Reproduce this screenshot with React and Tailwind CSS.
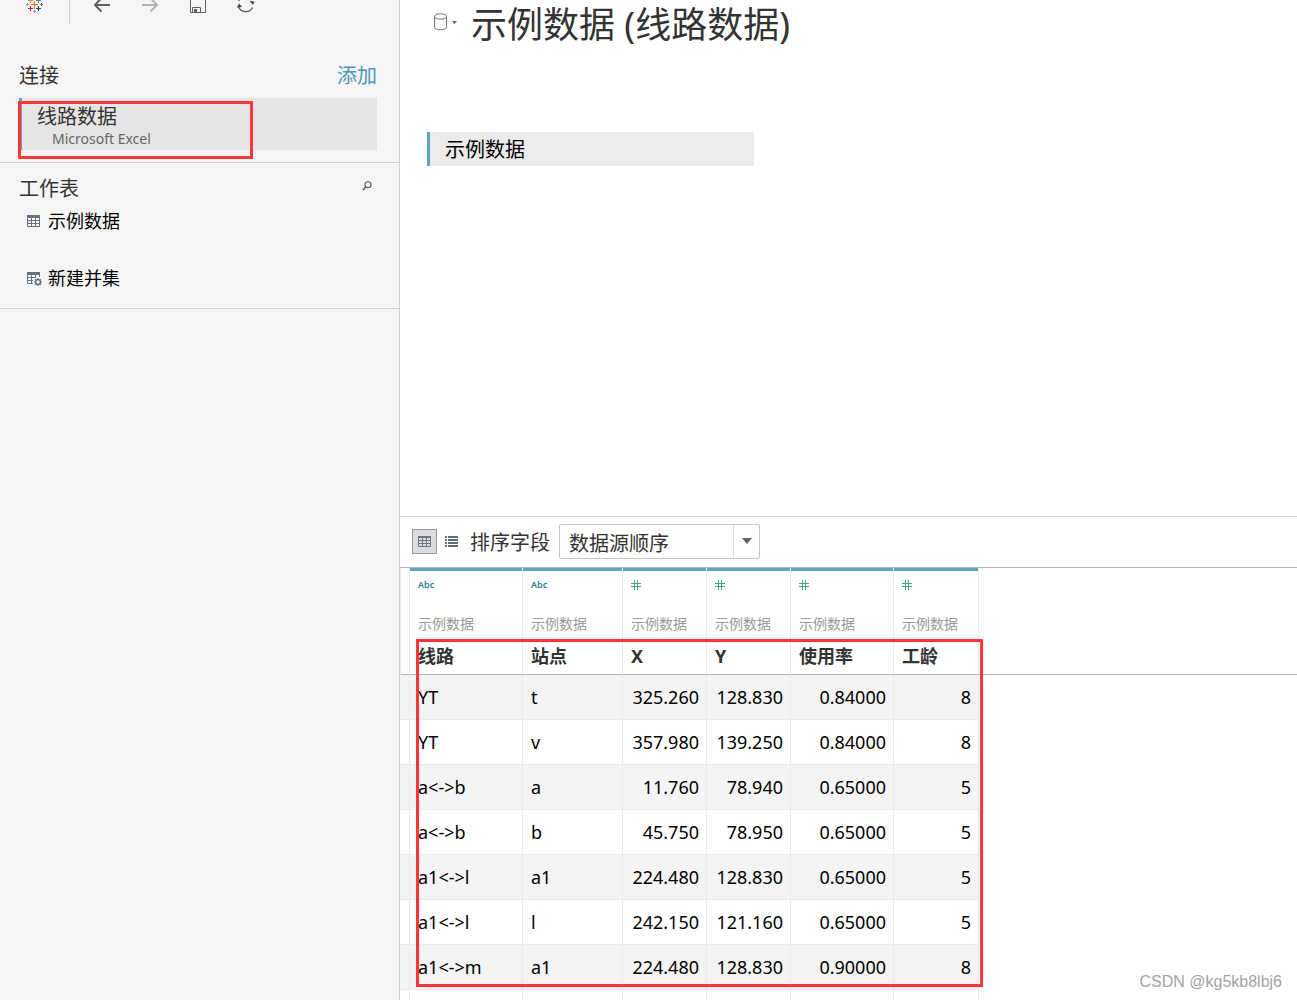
import { useState } from 'react';

const columns = [
  { name: '线路', type: 'text', width: 'w-[113px]' },
  { name: '站点', type: 'text', width: 'w-[100px]' },
  { name: 'X', type: 'number', width: 'w-[84px]' },
  { name: 'Y', type: 'number', width: 'w-[84px]' },
  { name: '使用率', type: 'number', width: 'w-[103px]' },
  { name: '工龄', type: 'number', width: 'w-[85px]' },
];

const rows = [
  ['YT', 't', '325.260', '128.830', '0.84000', '8'],
  ['YT', 'v', '357.980', '139.250', '0.84000', '8'],
  ['a<->b', 'a', '11.760', '78.940', '0.65000', '5'],
  ['a<->b', 'b', '45.750', '78.950', '0.65000', '5'],
  ['a1<->l', 'a1', '224.480', '128.830', '0.65000', '5'],
  ['a1<->l', 'l', '242.150', '121.160', '0.65000', '5'],
  ['a1<->m', 'a1', '224.480', '128.830', '0.90000', '8'],
  ['', '', '', '', '', ''],
];

const LogoIcon = () => (
  <svg width="24" height="14" viewBox="0 0 24 14" fill="none">
    <path d="M12.5 1v8M9 4.500h7" stroke="#e8762b" strokeWidth="1.2" />
    <path d="M8.500 -2v5M6 .5h5" stroke="#eb9129" strokeWidth="1.1" />
    <path d="M16.500 -2v5M14 .5h5" stroke="#59879b" strokeWidth="1.1" />
    <path d="M8.500 6v5M6 8.500h5" stroke="#c72035" strokeWidth="1.1" />
    <path d="M16.500 6v5M14 8.500h5" stroke="#1f457e" strokeWidth="1.1" />
    <path d="M5.500 3v3M4 4.500h3" stroke="#7ba6b8" />
    <path d="M19.500 3v3M18 4.500h3" stroke="#5b6591" />
    <path d="M12.500 10v3M11 11.500h3" stroke="#7b94b8" />
  </svg>
);

const BackIcon = () => (
  <svg width="24" height="14" viewBox="0 0 24 14" fill="none" stroke="#606060" strokeWidth="2">
    <path d="M20 5H5M11.500 -2L5 5l6.500 6.500" />
  </svg>
);

const ForwardIcon = () => (
  <svg width="24" height="14" viewBox="0 0 24 14" fill="none" stroke="#b3b3b3" strokeWidth="2">
    <path d="M4 5h15M12.500 -2L19 5l-6.500 6.500" />
  </svg>
);

const SaveIcon = () => (
  <svg width="24" height="14" viewBox="0 0 24 14" fill="none" stroke="#606060">
    <path d="M4.500 -2v14.500h15V-2M6.500 12.500v-5h8v5" />
    <path d="M8 9h3v3H8z" fill="#606060" stroke="none" />
  </svg>
);

const RefreshIcon = () => (
  <svg width="24" height="14" viewBox="0 0 24 14" fill="none" stroke="#555" strokeWidth="1.2">
    <path d="M4.500 6.500a7.600 7.600 0 0 0 14 1M4.800 1a7 7 0 0 1 1.500-2" />
    <path d="M2.800 7.500L5.200 3.500 8 7zM15.500 1l5 .5-1.500 3.500z" fill="#444" stroke="none" />
  </svg>
);

const SheetIcon = () => (
  <svg width="14" height="12" viewBox="0 0 14 12" fill="none" stroke="#68717e">
    <path d="M.5 .5h12v11H.5zM4.500 2v10M8.500 2v10M0 5.500h13M0 8.500h13" />
    <path d="M0 1.500h13" strokeWidth="3" />
  </svg>
);

const UnionIcon = () => (
  <svg width="16" height="14" viewBox="0 0 16 14" fill="none" stroke="#68717e">
    <path d="M.5 .5v11H6M4.500 2v10M8.500 2v4M0 5.500h8M0 8.500h6M12.500 1v4" />
    <path d="M0 1.500h13" strokeWidth="3" />
    <circle cx="11" cy="10" r="2.500" strokeWidth="1.500" />
    <path d="M11 6v1.500M11 12.500V14M7 10h1.500M13.500 10H15M8.200 7.200l1 1M12.800 11.800l1 1M13.800 7.200l-1 1M9.200 11.800l-1 1" strokeWidth="1.200" />
  </svg>
);

const SearchIcon = () => (
  <svg width="10" height="10" viewBox="0 0 10 10" fill="none" stroke="#555">
    <circle cx="6" cy="3.800" r="3" strokeWidth="1.100" />
    <path d="M3.800 6L.8 9.200" strokeWidth="1.300" />
  </svg>
);

const GridIcon = () => (
  <svg width="13" height="11" viewBox="0 0 13 11" fill="none" stroke="#6b7589">
    <path d="M.5 .5h12v10H.5zM4.500 1v10M8.500 1v10M0 4.500h13M0 7.500h13" />
    <path d="M0 1h13" strokeWidth="2" />
  </svg>
);

const ListIcon = () => (
  <svg width="13" height="11" viewBox="0 0 13 11" fill="#5f6b84">
    <path d="M0 0h2v2H0zM0 3h2v2H0zM0 6h2v2H0zM0 9h2v2H0zM3 0h10v2H3zM3 3h10v2H3zM3 6h10v2H3zM3 9h10v2H3z" />
  </svg>
);

const DatabaseIcon = () => (
  <svg width="24" height="18" viewBox="0 0 24 18" fill="none" stroke="#707070">
    <ellipse cx="7.500" cy="3.500" rx="6" ry="2.700" />
    <path d="M1.500 3.500v10.500c0 3.600 12 3.600 12 0V3.500" />
    <path d="M19 8h5l-2.500 3z" fill="#666" stroke="none" />
  </svg>
);

const NumberIcon = () => (
  <svg width="10" height="10" viewBox="0 0 10 10" fill="none" stroke="#45a582">
    <path d="M3.500 0v10M6.500 0v10M0 3.500h10M0 6.500h10" />
  </svg>
);

const Sidebar = () => (
  <aside className="w-[400px] shrink-0 border-r border-[#d0d0d0] bg-[#f5f5f5] text-[#333]">
    <div className="flex h-6 items-start pl-[22px]">
      <button type="button" aria-label="开始页面"><LogoIcon /></button>
      <div className="ml-[23px] mr-5 h-6 w-px bg-[#d0d0d0]" />
      <div className="flex gap-6">
        <button type="button" aria-label="后退"><BackIcon /></button>
        <button type="button" aria-label="前进"><ForwardIcon /></button>
        <button type="button" aria-label="保存"><SaveIcon /></button>
        <button type="button" aria-label="刷新"><RefreshIcon /></button>
      </div>
    </div>

    {/* Connections */}
    <section className="border-b border-[#d0d0d0] pt-9 pr-[22px] pb-3 pl-[19px]">
      <div className="flex items-center justify-between text-[20px] leading-8">
        <h2>连接</h2>
        <a href="#add" className="text-[#4996b2]">添加</a>
      </div>
      <div className="relative mt-1.5">
        <button type="button" className="block h-[52px] w-full border-l-[3px] border-[#5fa3c7] bg-[#e5e5e5] pl-[15px] text-left">
          <span className="block pt-0.5 text-[20px] leading-7">线路数据</span>
          <span className="block pl-[15px] text-[14px] leading-4 text-[#666]">Microsoft Excel</span>
        </button>
        <div className="pointer-events-none absolute top-[3px] -left-px h-[58px] w-[235px] border-[3px] border-[#ff3636]" />
      </div>
    </section>

    {/* Sheets */}
    <section className="border-b border-[#d0d0d0] pt-2 pb-3 pl-[19px]">
      <div className="flex items-center justify-between pr-[27px] text-[20px] leading-8">
        <h2 className="pt-0.5">工作表</h2>
        <button type="button" aria-label="搜索" className="pb-1"><SearchIcon /></button>
      </div>
      <button type="button" className="flex h-8 items-center pl-2 text-[18px] text-black">
        <span className="w-[21px]"><SheetIcon /></span>
        示例数据
      </button>
      <button type="button" className="mt-6 flex h-[35px] items-center pl-2 text-[18px] text-black">
        <span className="w-[21px]"><UnionIcon /></span>
        新建并集
      </button>
    </section>
  </aside>
);

const DataGrid = () => (
  <div className="relative min-h-0 flex-1 overflow-hidden">
    <table className="w-full table-fixed border-separate border-spacing-0">
      <colgroup>
        <col className="w-[10px]" />
        {columns.map(c => <col key={c.name} className={c.width} />)}
        <col />
      </colgroup>
      <thead>
        <tr className="h-[107px]">
          <td className="border-x border-b border-x-[#ebebeb] border-b-[#b5b5b5]" />
          {columns.map(c => (
            <th key={c.name} scope="col"
              className="border-r border-b border-r-[#ebebeb] border-b-[#b5b5b5] p-0 text-left align-top">
              <div className="h-[3px] bg-[#5fa3c7]" />
              <div className="pl-2">
                <div className="flex h-7 items-center text-[9px] font-semibold text-[#2f7899]">
                  {c.type === 'text' ? 'Abc' : <NumberIcon />}
                </div>
                <div className="mt-[13px] text-[14px] leading-6 font-normal text-[#999]">示例数据</div>
                <div className="mt-1 text-[18px] leading-8 font-bold text-[#333]">{c.name}</div>
              </div>
            </th>
          ))}
          <td className="border-b border-[#b5b5b5]" />
        </tr>
      </thead>
      <tbody>
        {rows.map((row, i) => (
          <tr key={i} className="h-[45px] text-[18px] leading-6 text-black">
            <td className={`border-r border-b border-[#ebebeb] ${i % 2 === 0 ? 'bg-[#f4f4f4]' : 'bg-white'}`} />
            {row.map((value, j) => (
              <td key={j}
                className={`border-r border-b border-[#ebebeb] py-0 pr-[7px] pl-2 ${
                  i % 2 === 0 ? 'bg-[#f4f4f4]' : 'bg-white'
                } ${columns[j].type === 'number' ? 'text-right' : 'text-left'}`}>
                {value}
              </td>
            ))}
            <td />
          </tr>
        ))}
      </tbody>
    </table>
    <div className="pointer-events-none absolute top-[71px] left-4 h-[348px] w-[567px] border-[3px] border-[#ff3636]" />
  </div>
);

export default function App() {
  const [order, setOrder] = useState('source');

  return (
    <div className="relative flex h-screen overflow-hidden bg-white font-['Noto_Sans','Noto_Sans_CJK_SC',sans-serif]">
      <Sidebar />

      <main className="flex min-w-0 flex-1 flex-col">
        <div className="h-[516px] shrink-0">
          <div className="flex h-12 items-center pl-[33px] text-[#333]">
            <button type="button" aria-label="数据源" className="mb-1"><DatabaseIcon /></button>
            <h1 className="ml-3.5 pt-0.5 text-[36px] leading-[48px]">示例数据 (线路数据)</h1>
          </div>
          <button type="button"
            className="mt-[84px] ml-[27px] block h-[34px] w-[327px] border-l-[3px] border-[#5fa3c7] bg-[#ebebeb] pt-0.5 pl-[15px] text-left text-[20px] leading-8 text-black">
            示例数据
          </button>
        </div>

        {/* Grid toolbar */}
        <div className="flex h-[52px] shrink-0 items-center border-t border-b border-t-[#d0d0d0] border-b-[#b5b5b5] pb-0.5 pl-3 text-[20px] text-[#333]">
          <button type="button" aria-label="网格视图"
            className="flex h-[25px] w-[25px] items-center justify-center border border-[#999] bg-[#dcdcdc]">
            <GridIcon />
          </button>
          <button type="button" aria-label="列表视图" className="ml-2"><ListIcon /></button>
          <label htmlFor="order" className="ml-3 pt-1">排序字段</label>
          <div className="relative ml-[9px] h-[35px] w-[201px]">
            <select id="order" value={order} onChange={e => setOrder(e.target.value)}
              className="h-full w-full appearance-none rounded-[2px] border border-[#c4c4c4] bg-white pt-1 pl-[9px]">
              <option value="source">数据源顺序</option>
              <option value="table">表顺序</option>
            </select>
            <div className="pointer-events-none absolute top-px right-px bottom-px flex w-[26px] items-center justify-center border-l border-[#ddd]">
              <svg width="10" height="6" viewBox="0 0 10 6" fill="#666"><path d="M0 0h10L5 6z" /></svg>
            </div>
          </div>
        </div>

        <DataGrid />
      </main>

      <div className="absolute right-[15px] bottom-2 font-['Liberation_Sans',sans-serif] text-[16px] leading-5 text-[#a3a3a3]">
        CSDN @kg5kb8lbj6
      </div>
    </div>
  );
}
